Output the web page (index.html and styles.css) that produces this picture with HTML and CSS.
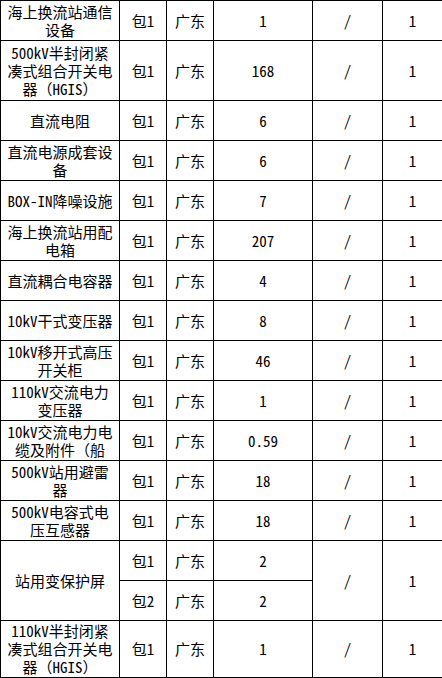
FILE: index.html
```html
<!DOCTYPE html>
<html lang="zh-CN">
<head>
<meta charset="utf-8">
<title>设备清单</title>
<link rel="stylesheet" href="styles.css">
</head>
<body>
<table class="grid">
  <colgroup>
    <col class="c-name">
    <col class="c-pack">
    <col class="c-area">
    <col class="c-qty">
    <col class="c-slash">
    <col class="c-one">
  </colgroup>
  <tbody>
    <tr class="r2"><td class="name">海上换流站通信设备</td><td>包1</td><td>广东</td><td>1</td><td>/</td><td>1</td></tr>
    <tr class="r3"><td class="name">500kV半封闭紧凑式组合开关电器（HGIS）</td><td>包1</td><td>广东</td><td>168</td><td>/</td><td>1</td></tr>
    <tr class="r2"><td class="name">直流电阻</td><td>包1</td><td>广东</td><td>6</td><td>/</td><td>1</td></tr>
    <tr class="r2"><td class="name">直流电源成套设备</td><td>包1</td><td>广东</td><td>6</td><td>/</td><td>1</td></tr>
    <tr class="r2"><td class="name">BOX-IN降噪设施</td><td>包1</td><td>广东</td><td>7</td><td>/</td><td>1</td></tr>
    <tr class="r2"><td class="name">海上换流站用配电箱</td><td>包1</td><td>广东</td><td>207</td><td>/</td><td>1</td></tr>
    <tr class="r2"><td class="name">直流耦合电容器</td><td>包1</td><td>广东</td><td>4</td><td>/</td><td>1</td></tr>
    <tr class="r2"><td class="name">10kV干式变压器</td><td>包1</td><td>广东</td><td>8</td><td>/</td><td>1</td></tr>
    <tr class="r2"><td class="name">10kV移开式高压开关柜</td><td>包1</td><td>广东</td><td>46</td><td>/</td><td>1</td></tr>
    <tr class="r2"><td class="name">110kV交流电力变压器</td><td>包1</td><td>广东</td><td>1</td><td>/</td><td>1</td></tr>
    <tr class="r2"><td class="name">10kV交流电力电缆及附件（船</td><td>包1</td><td>广东</td><td>0.59</td><td>/</td><td>1</td></tr>
    <tr class="r2"><td class="name">500kV站用避雷器</td><td>包1</td><td>广东</td><td>18</td><td>/</td><td>1</td></tr>
    <tr class="r2"><td class="name">500kV电容式电压互感器</td><td>包1</td><td>广东</td><td>18</td><td>/</td><td>1</td></tr>
    <tr class="r2"><td class="name" rowspan="2">站用变保护屏</td><td>包1</td><td>广东</td><td>2</td><td rowspan="2">/</td><td rowspan="2">1</td></tr>
    <tr class="r2"><td>包2</td><td>广东</td><td>2</td></tr>
    <tr class="r3 last"><td class="name">110kV半封闭紧凑式组合开关电器（HGIS）</td><td>包1</td><td>广东</td><td>1</td><td>/</td><td>1</td></tr>
  </tbody>
</table>
</body>
</html>
```
FILE: styles.css
```css
html, body {
  margin: 0;
  padding: 0;
  background: #ffffff;
}

.grid {
  border-collapse: collapse;
  table-layout: fixed;
  width: 442px;
  font-family: "Noto Sans Mono CJK SC", "Noto Sans CJK SC", sans-serif;
  font-size: 15px;
  font-weight: 300;
  line-height: 18px;
  color: #000000;
}

.c-name { width: 119px; }
.c-pack { width: 47px; }
.c-area { width: 47px; }
.c-qty { width: 99px; }
.c-slash { width: 70px; }
.c-one { width: 60px; }

.grid td {
  border: 1px solid #000000;
  text-align: center;
  vertical-align: middle;
  padding: 0 2px;
  overflow: hidden;
}

.grid td.name {
  padding: 0 4px;
}

.r2 { height: 40px; }
.r3 { height: 60px; }
.r3.last { height: 57px; }
```
